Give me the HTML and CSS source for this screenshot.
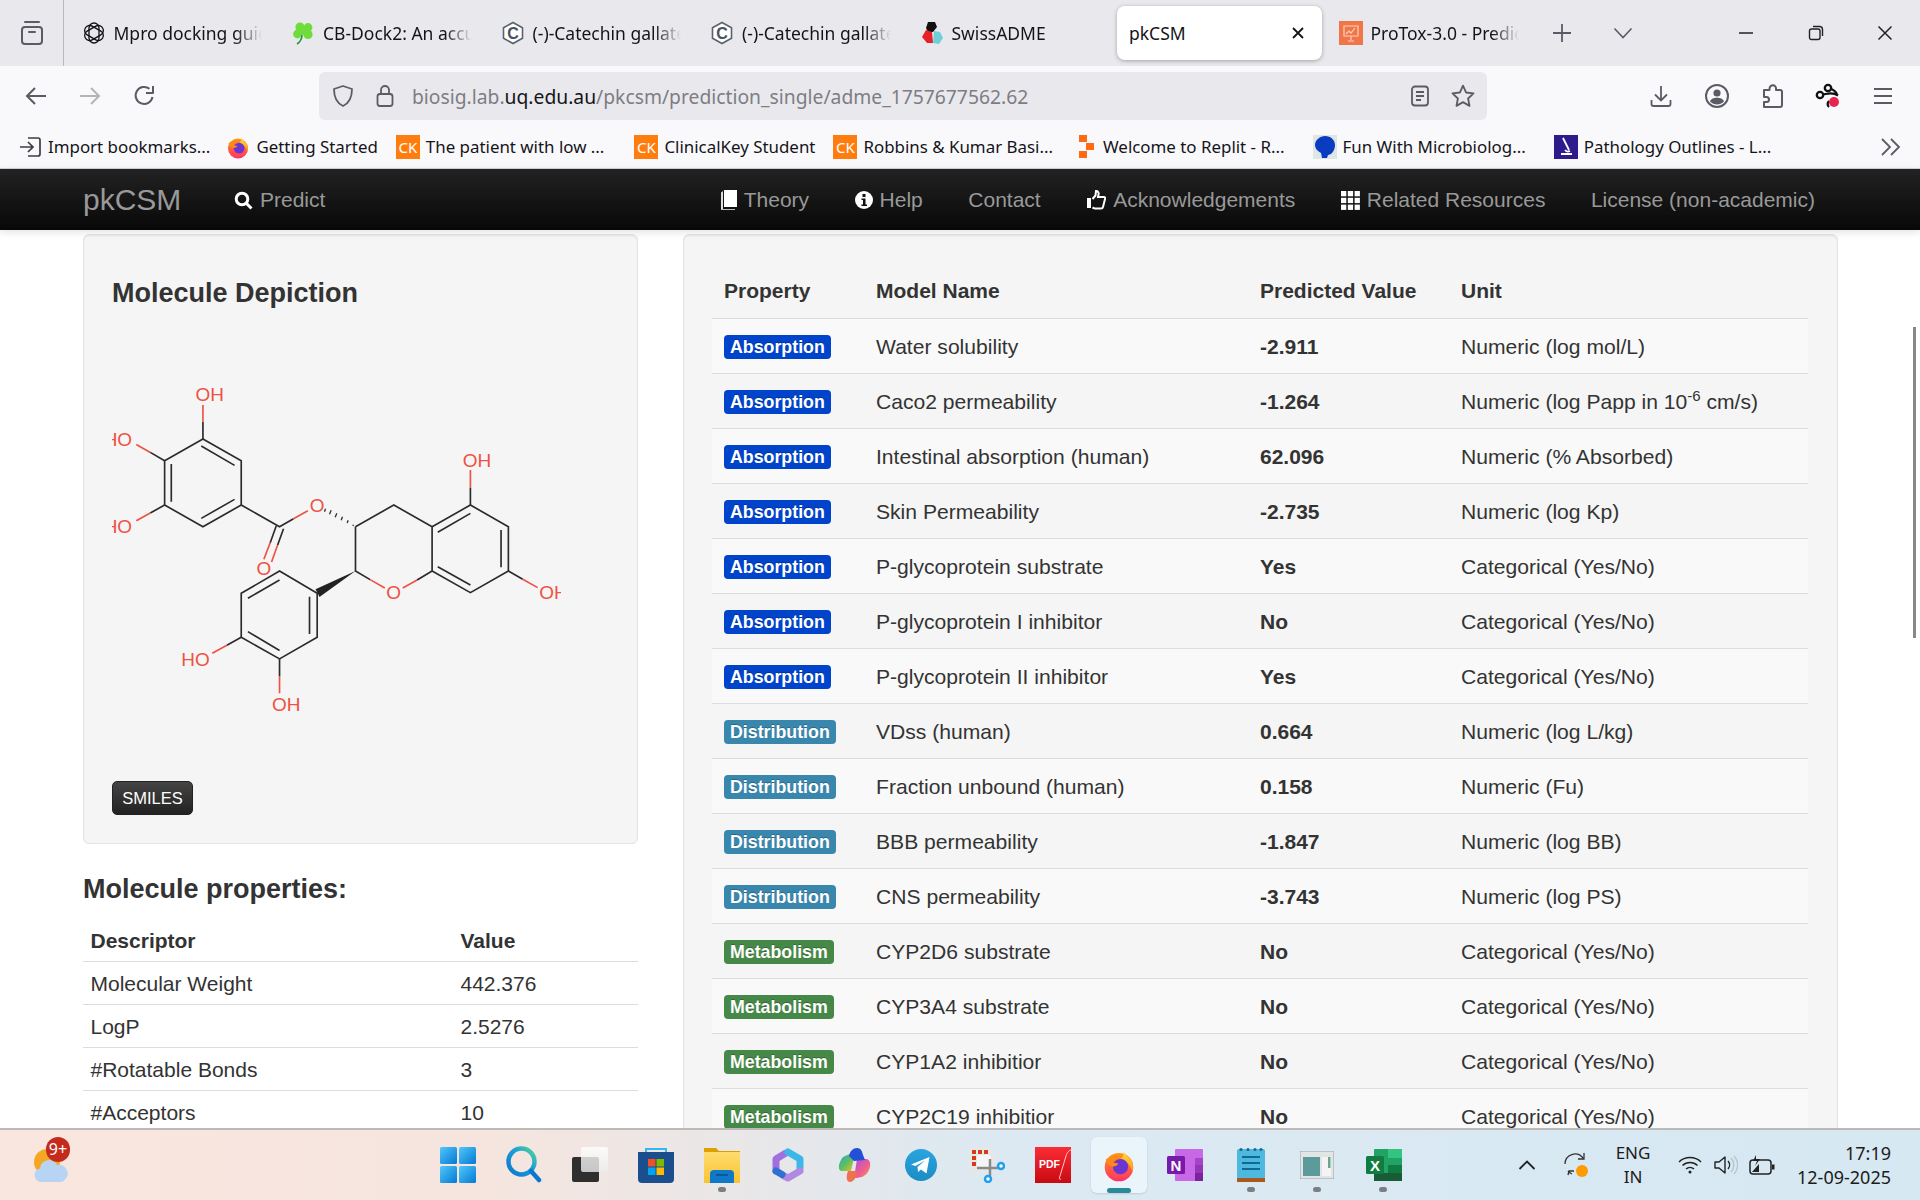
FILE: index.html
```html
<!DOCTYPE html>
<html lang="en">
<head>
    <meta charset="UTF-8">
    <title>pkCSM</title>
    <link rel="stylesheet" href="styles.css">
</head>
<body>
    <svg class="defs" width="0" height="0">
        <defs>
            <linearGradient id="fxBody" x1="0" y1="0" x2="0" y2="1"><stop offset="0" stop-color="#ff980e"/><stop offset="1" stop-color="#ff2f6a"/></linearGradient>
            <linearGradient id="fxTop" x1="0" y1="0" x2="0" y2="1"><stop offset="0" stop-color="#ffe14a"/><stop offset="1" stop-color="#ff9a10"/></linearGradient>
            <linearGradient id="winBlue" x1="0" y1="0" x2="1" y2="1"><stop offset="0" stop-color="#4fc8fa"/><stop offset="1" stop-color="#0678d4"/></linearGradient>
            <linearGradient id="searchRing" x1="0" y1="1" x2="1" y2="0"><stop offset="0" stop-color="#0a78d0"/><stop offset=".6" stop-color="#1f9fd8"/><stop offset="1" stop-color="#52d890"/></linearGradient>
            <linearGradient id="copA" x1="0" y1="0" x2="1" y2="1"><stop offset="0" stop-color="#2aa0e8"/><stop offset=".5" stop-color="#5cc05c"/><stop offset="1" stop-color="#f2c230"/></linearGradient>
            <linearGradient id="copB" x1="0" y1="0" x2="1" y2="1"><stop offset="0" stop-color="#b04ce0"/><stop offset=".6" stop-color="#f0608a"/><stop offset="1" stop-color="#f8a040"/></linearGradient>
            <linearGradient id="tg" x1="0" y1="0" x2="0" y2="1"><stop offset="0" stop-color="#2aa5e0"/><stop offset="1" stop-color="#1c8cc4"/></linearGradient>
            <linearGradient id="pdfRed" x1="0" y1="0" x2="0" y2="1"><stop offset="0" stop-color="#fb2c36"/><stop offset="1" stop-color="#c80a10"/></linearGradient>
            <linearGradient id="folderBody" x1="0" y1="0" x2="0" y2="1"><stop offset="0" stop-color="#ffdc6e"/><stop offset="1" stop-color="#f8c430"/></linearGradient>
            <linearGradient id="tvTop" x1="0" y1="0" x2="0" y2="1"><stop offset="0" stop-color="#ffffff"/><stop offset="1" stop-color="#ececec"/></linearGradient>
            <symbol id="firefox" viewBox="0 0 32 32">
                <circle cx="16" cy="18" r="13.4" fill="url(#fxBody)"/>
                <path d="M20 1.5c.6 4.6 5.6 6.6 8 11.4 1.3 2.8 1.6 6.4.6 9.4-2.2-7-6-10.6-11-11.6 2.6-2.6 3.4-5.6 2.4-9.2z" fill="url(#fxTop)"/>
                <circle cx="17.4" cy="17.6" r="7.2" fill="#6a35d0"/>
                <path d="M3.5 11c3-3.2 8-3.6 11.6-1.4-3 .4-5 2-5.4 4 2.4.4 4 .6 5.8 1.2-1.6 2.2-4 3-6.4 2.4-2.6-.6-5-3-5.6-6.2z" fill="#ff8a16"/>
                <path d="M11 27c5 2.4 12 1.4 15.6-3.6-4 2.6-9 3.2-13 1.4z" fill="#ff4a5a"/>
            </symbol>
        </defs>
    </svg>

    <div class="tabbar">
        <button class="sidebar-btn">
            <svg width="24" height="26" viewBox="0 0 24 26" fill="none" stroke="#5b5b66" stroke-width="2"><rect x="2" y="7" width="20" height="17" rx="3"/><path d="M5 2h14M9 12h6" stroke-linecap="round"/></svg>
        </button>
        <div class="tabs">
            <div class="tab"><div class="tab-in">
                <svg class="fav" viewBox="0 0 24 24" fill="none" stroke="#111" stroke-width="1.3"><rect x="7" y="2" width="10" height="20" rx="5"/><rect x="7" y="2" width="10" height="20" rx="5" transform="rotate(60 12 12)"/><rect x="7" y="2" width="10" height="20" rx="5" transform="rotate(120 12 12)"/></svg>
                <span class="tab-title">Mpro docking guide</span>
            </div></div>
            <div class="tab"><div class="tab-in">
                <svg class="fav" viewBox="0 0 24 24"><g fill="#6fdc3c"><circle cx="9" cy="6" r="4.6"/><circle cx="17" cy="6.5" r="4.4"/><circle cx="6.5" cy="13" r="4.4"/><circle cx="17" cy="13.5" r="4.6"/><circle cx="12" cy="10" r="4"/></g><path d="M11 14c0 4-2 7-5 9" stroke="#1e9a3c" stroke-width="1.6" fill="none"/></svg>
                <span class="tab-title">CB-Dock2: An accurate</span>
            </div></div>
            <div class="tab"><div class="tab-in">
                <svg class="fav" viewBox="0 0 24 24"><path d="M12 1.5l9.5 5.3v10.4L12 22.5 2.5 17.2V6.8z" fill="#fff" stroke="#5a6270" stroke-width="1.6"/><text x="12" y="17.5" class="fav-c">C</text></svg>
                <span class="tab-title">(-)-Catechin gallate</span>
            </div></div>
            <div class="tab"><div class="tab-in">
                <svg class="fav" viewBox="0 0 24 24"><path d="M12 1.5l9.5 5.3v10.4L12 22.5 2.5 17.2V6.8z" fill="#fff" stroke="#5a6270" stroke-width="1.6"/><text x="12" y="17.5" class="fav-c">C</text></svg>
                <span class="tab-title">(-)-Catechin gallate</span>
            </div></div>
            <div class="tab"><div class="tab-in">
                <svg class="fav" viewBox="0 0 24 24"><path d="M8 1h7l2 5-4 5H8l-2-4z" fill="#111"/><path d="M6 9l6 2 1 11H7l-5-6z" fill="#e8202a"/><path d="M14 10l6 1 3 6-4 6-6-1z" fill="#6fd0d8"/></svg>
                <span class="tab-title">SwissADME</span>
            </div></div>
            <div class="tab tab-active"><div class="tab-in">
                <span class="tab-title plain">pkCSM</span>
                <svg class="tab-x" width="14" height="14" viewBox="0 0 14 14" stroke="#15141a" stroke-width="1.8"><path d="M2 2l10 10M12 2L2 12"/></svg>
            </div></div>
            <div class="tab"><div class="tab-in">
                <svg class="fav" viewBox="0 0 24 24"><rect width="24" height="24" fill="#f0764a"/><path d="M5 5h14v10H5zM12 15v4M9 20h6" fill="none" stroke="#ffd0b8" stroke-width="1.2"/><path d="M7 13l3-3 2 2 4-5" fill="none" stroke="#ffd0b8" stroke-width="1.2"/></svg>
                <span class="tab-title">ProTox-3.0 - Prediction</span>
            </div></div>
        </div>
        <div class="tab-new"><svg width="20" height="20" viewBox="0 0 20 20" stroke="#5b5b66" stroke-width="1.8"><path d="M10 1v18M1 10h18"/></svg></div>
        <div class="tab-list"><svg width="20" height="12" viewBox="0 0 20 12" fill="none" stroke="#5b5b66" stroke-width="1.6"><path d="M1.5 1.5L10 10.5l8.5-9"/></svg></div>
        <div class="win-btns">
            <div class="win-btn"><svg width="16" height="16" viewBox="0 0 16 16" stroke="#222" stroke-width="1.5"><path d="M1 8h14"/></svg></div>
            <div class="win-btn"><svg width="16" height="16" viewBox="0 0 16 16" fill="none" stroke="#222" stroke-width="1.4"><rect x="1.5" y="4" width="10.5" height="10.5" rx="2"/><path d="M5 1.5h6.5a3 3 0 0 1 3 3V11"/></svg></div>
            <div class="win-btn"><svg width="16" height="16" viewBox="0 0 16 16" stroke="#222" stroke-width="1.5"><path d="M1.5 1.5l13 13M14.5 1.5l-13 13"/></svg></div>
        </div>
    </div>

    <div class="toolbar">
        <div class="tool-btn"><svg width="24" height="24" viewBox="0 0 24 24" fill="none" stroke="#5b5b66" stroke-width="2"><path d="M22 12H3M11 4l-8 8 8 8"/></svg></div>
        <div class="tool-btn"><svg width="24" height="24" viewBox="0 0 24 24" fill="none" stroke="#b4b4ba" stroke-width="2"><path d="M2 12h19M13 4l8 8-8 8"/></svg></div>
        <div class="tool-btn"><svg width="24" height="24" viewBox="0 0 24 24" fill="none" stroke="#5b5b66" stroke-width="2"><path d="M20.5 13a8.5 8.5 0 1 1-3-8.2"/><path d="M21 2v7h-7" stroke-linejoin="round"/></svg></div>
        <div class="urlbar">
            <svg width="24" height="24" viewBox="0 0 24 24" fill="none" stroke="#5b5b66" stroke-width="1.8"><path d="M12 2l9 3c0 9-2.5 14-9 17C5.5 19 3 14 3 5z" stroke-linejoin="round"/></svg>
            <svg class="lock" width="24" height="24" viewBox="0 0 24 24" fill="none" stroke="#5b5b66" stroke-width="1.8"><rect x="4.5" y="10" width="15" height="12" rx="2.5"/><path d="M8 10V6a4 4 0 0 1 8 0v4"/></svg>
            <span class="url-text">biosig.lab.<b>uq.edu.au</b>/pkcsm/prediction_single/adme_1757677562.62</span>
            <svg class="reader" width="24" height="24" viewBox="0 0 24 24" fill="none" stroke="#5b5b66" stroke-width="1.8"><rect x="4" y="2.5" width="16" height="19" rx="3"/><path d="M8 8h8M8 12h8M8 16h5"/></svg>
            <svg class="star" width="26" height="26" viewBox="0 0 24 24" fill="none" stroke="#5b5b66" stroke-width="1.7"><path d="M12 2.5l2.900 6.300 6.800.8-5 4.700 1.300 6.800-6-3.400-6 3.400 1.300-6.800-5-4.700 6.800-.8z" stroke-linejoin="round"/></svg>
        </div>
        <div class="tool-right">
            <div class="tool-icon"><svg width="24" height="24" viewBox="0 0 24 24" fill="none" stroke="#5b5b66" stroke-width="1.8"><path d="M12 2v14M6 10.5l6 6 6-6M2.5 16v4a2 2 0 0 0 2 2h15a2 2 0 0 0 2-2v-4"/></svg></div>
            <div class="tool-icon"><svg width="26" height="26" viewBox="0 0 26 26"><circle cx="13" cy="13" r="11" fill="none" stroke="#5b5b66" stroke-width="2"/><circle cx="13" cy="10" r="3.6" fill="#5b5b66"/><path d="M6 18.5c1-3 4-3.800 7-3.800s6 .8 7 3.800c-2 2-4.500 3-7 3s-5-1-7-3z" fill="#5b5b66"/></svg></div>
            <div class="tool-icon"><svg width="24" height="26" viewBox="0 0 24 26" fill="none" stroke="#5b5b66" stroke-width="2"><path d="M9.5 7h-5.500v7h2.500a2.500 2.500 0 0 1 0 5h-2.500v5h16a2 2 0 0 0 2-2V9a2 2 0 0 0-2-2h-4V6a3.200 3.200 0 0 0-6.400-1z" stroke-linejoin="round"/></svg></div>
            <div class="tool-icon"><svg width="26" height="26" viewBox="0 0 26 26" fill="none" stroke="#111" stroke-width="2.3"><circle cx="13" cy="5" r="3.2"/><circle cx="5" cy="12" r="3.2"/><path d="M8 11.500c4-.5 9-3 15 1M15 5.500c3 1 6 3 7 6M14 18a4 4 0 0 0 0 6"/><circle cx="19" cy="19" r="5" fill="#e8254f" stroke="none"/></svg></div>
            <div class="tool-icon"><svg width="20" height="18" viewBox="0 0 20 18" stroke="#5b5b66" stroke-width="2"><path d="M1 2h18M1 9h18M1 16h18"/></svg></div>
        </div>
    </div>

    <div class="bookmarks">
        <div class="bm bm-first">
            <svg class="fav" viewBox="0 0 24 24" fill="none" stroke="#3c3c44" stroke-width="1.7"><path d="M10 3h10a2 2 0 0 1 2 2v14a2 2 0 0 1-2 2H10M2 12h13M10 7l5 5-5 5"/></svg>
            <span>Import bookmarks...</span>
        </div>
        <div class="bm">
            <svg class="fav"><use href="#firefox"/></svg>
            <span>Getting Started</span>
        </div>
        <div class="bm bm-long">
            <span class="ck">CK</span>
            <span>The patient with low ...</span>
        </div>
        <div class="bm">
            <span class="ck">CK</span>
            <span>ClinicalKey Student</span>
        </div>
        <div class="bm bm-mid">
            <span class="ck">CK</span>
            <span>Robbins &amp; Kumar Basi...</span>
        </div>
        <div class="bm bm-wide">
            <svg class="fav-thin" viewBox="0 0 22 24" fill="#ff6a13"><rect x="4" y="0" width="8" height="7"/><rect x="11" y="8" width="8" height="7"/><rect x="4" y="16" width="8" height="7"/></svg>
            <span>Welcome to Replit - R...</span>
        </div>
        <div class="bm bm-wide">
            <svg class="fav" viewBox="0 0 24 24"><rect width="24" height="24" fill="#dfe6e8"/><path d="M12 1c6 0 10 4 10 9 0 6-4 10-7 10l-1 3H9l-1-5c-4-2-6-5-6-8C2 5 7 1 12 1z" fill="#0a3cc0"/></svg>
            <span>Fun With Microbiolog...</span>
        </div>
        <div class="bm">
            <svg class="fav" viewBox="0 0 24 24"><rect width="24" height="24" fill="#2d1b8e"/><path d="M9 3l6 12M7 19h11M11 15a4 4 0 0 0 5 1" fill="none" stroke="#fff" stroke-width="1.8"/></svg>
            <span>Pathology Outlines - L...</span>
        </div>
        <svg class="bm-more" width="22" height="20" viewBox="0 0 22 20" fill="none" stroke="#5b5b66" stroke-width="1.8"><path d="M2 2l8 8-8 8M11 2l8 8-8 8"/></svg>
    </div>

    <nav class="navbar">
        <a class="brand">pkCSM</a>
        <a class="nav-link">
            <svg width="19" height="19" viewBox="0 0 19 19" fill="none" stroke="#fff" stroke-width="3"><circle cx="8" cy="8" r="5.8"/><path d="M12 12l5.500 5.500"/></svg>
            Predict
        </a>
        <div class="nav-right">
            <a class="nav-link">
                <svg width="16" height="20" viewBox="0 0 16 20"><path d="M3 0h13v17H3z" fill="#fff"/><path d="M0 2.500L2 1v18l-2 1z" fill="#ddd"/><path d="M0 19h14v1H0z" fill="#bbb"/></svg>
                Theory
            </a>
            <a class="nav-link">
                <svg width="18" height="18" viewBox="0 0 18 18"><circle cx="9" cy="9" r="9" fill="#fff"/><rect x="7.5" y="3" width="3" height="3" fill="#111"/><path d="M6.500 7.500h4v6h1.500v1.500H6.500v-1.500H8V9H6.500z" fill="#111"/></svg>
                Help
            </a>
            <a class="nav-link">Contact</a>
            <a class="nav-link">
                <svg width="20" height="20" viewBox="0 0 20 20" fill="none" stroke="#fff" stroke-width="2"><path d="M6.500 9l3-3.500L10 1c2 0 3 1.500 2.500 3.500L12 7h6c1 0 1.500 1 1 2l-2 8c-.2 1-1 1.500-2 1.500H9c-1 0-1.500-.5-2.500-1"/><rect x="1" y="8" width="4" height="10" fill="#fff" stroke="none"/></svg>
                Acknowledgements
            </a>
            <a class="nav-link">
                <svg width="19" height="19" viewBox="0 0 19 19" fill="#fff"><rect width="5.3" height="5.3"/><rect x="6.8" width="5.3" height="5.3"/><rect x="13.6" width="5.3" height="5.3"/><rect y="6.8" width="5.3" height="5.3"/><rect x="6.8" y="6.8" width="5.3" height="5.3"/><rect x="13.6" y="6.8" width="5.3" height="5.3"/><rect y="13.6" width="5.3" height="5.3"/><rect x="6.8" y="13.6" width="5.3" height="5.3"/><rect x="13.6" y="13.6" width="5.3" height="5.3"/></svg>
                Related Resources
            </a>
            <a class="nav-link">License (non-academic)</a>
        </div>
    </nav>

    <div class="content">
        <div class="col-left">
            <div class="well well-mol">
                <h3>Molecule Depiction</h3>
                <svg class="mol" width="449" height="370" viewBox="97 0 1348 1110">
                    <g fill="none" stroke="#2b2b2b" stroke-width="5">
                        <path d="M370 237L485 302V435L370 500L255 435V302Z"/>
                        <path d="M365 258L465 316M275 312V425M365 475L465 418"/>
                        <path d="M370 237V185M255 302L212 277M255 435L212 459"/>
                        <path d="M485 435L600 500L642 476"/>
                        <path d="M590 498L572 548M612 506L594 556"/>
                        <path d="M828 500L943 435L1058 500V633L1013 660M828 500V633L872 659"/>
                        <path d="M1058 500L1173 435L1287 500V633L1173 698L1058 633"/>
                        <path d="M1075 517L1173 460M1265 510V622M1075 620L1173 675"/>
                        <path d="M1173 435V382M1287 633L1330 658"/>
                        <path d="M713 700L600 633L485 700V832L600 897L713 832Z"/>
                        <path d="M505 715L600 660M690 710V822M505 815L600 872"/>
                        <path d="M485 832L442 856M600 897V950"/>
                    </g>
                    <g fill="none" stroke="#ee5244" stroke-width="5">
                        <path d="M370 185V135M212 277L170 253M212 459L170 482"/>
                        <path d="M642 476L685 452"/>
                        <path d="M572 548L553 598M594 556L576 606"/>
                        <path d="M1013 660L970 684M872 659L916 684"/>
                        <path d="M1173 382V330M1330 658L1375 683"/>
                        <path d="M442 856L398 880M600 950V1000"/>
                    </g>
                    <polygon points="828,633 708,688 720,711" fill="#222"/>
                    <path d="M738 446l-3 9M755 451l-5 12M772 460l-5 12M789 470l-4 11M806 481l-3 8M822 494l-2 4" fill="none" stroke="#333" stroke-width="4"/>
                    <g class="atom">
                        <text x="348" y="124">OH</text>
                        <text x="72" y="258">HO</text>
                        <text x="72" y="518">HO</text>
                        <text x="691" y="456">O</text>
                        <text x="531" y="646">O</text>
                        <text x="1150" y="322">OH</text>
                        <text x="920" y="718">O</text>
                        <text x="1380" y="718">OH</text>
                        <text x="305" y="918">HO</text>
                        <text x="577" y="1052">OH</text>
                    </g>
                </svg>
                <button class="btn-smiles">SMILES</button>
            </div>
            <h3 class="props-title">Molecule properties:</h3>
            <table class="props">
                <tr><th class="props-a">Descriptor</th><th>Value</th></tr>
                <tr><td>Molecular Weight</td><td>442.376</td></tr>
                <tr><td>LogP</td><td>2.5276</td></tr>
                <tr><td>#Rotatable Bonds</td><td>3</td></tr>
                <tr><td>#Acceptors</td><td>10</td></tr>
            </table>
        </div>
        <div class="col-right">
            <div class="well well-table">
                <table class="results">
                    <colgroup><col class="c1"><col class="c2"><col class="c3"><col class="c4"></colgroup>
                    <tr class="head"><th>Property</th><th>Model Name</th><th>Predicted Value</th><th>Unit</th></tr>
                    <tr><td><span class="label abs">Absorption</span></td><td>Water solubility</td><td><b>-2.911</b></td><td>Numeric (log mol/L)</td></tr>
                    <tr><td><span class="label abs">Absorption</span></td><td>Caco2 permeability</td><td><b>-1.264</b></td><td>Numeric (log Papp in 10<sup>-6</sup> cm/s)</td></tr>
                    <tr><td><span class="label abs">Absorption</span></td><td>Intestinal absorption (human)</td><td><b>62.096</b></td><td>Numeric (% Absorbed)</td></tr>
                    <tr><td><span class="label abs">Absorption</span></td><td>Skin Permeability</td><td><b>-2.735</b></td><td>Numeric (log Kp)</td></tr>
                    <tr><td><span class="label abs">Absorption</span></td><td>P-glycoprotein substrate</td><td><b>Yes</b></td><td>Categorical (Yes/No)</td></tr>
                    <tr><td><span class="label abs">Absorption</span></td><td>P-glycoprotein I inhibitor</td><td><b>No</b></td><td>Categorical (Yes/No)</td></tr>
                    <tr><td><span class="label abs">Absorption</span></td><td>P-glycoprotein II inhibitor</td><td><b>Yes</b></td><td>Categorical (Yes/No)</td></tr>
                    <tr><td><span class="label dist">Distribution</span></td><td>VDss (human)</td><td><b>0.664</b></td><td>Numeric (log L/kg)</td></tr>
                    <tr><td><span class="label dist">Distribution</span></td><td>Fraction unbound (human)</td><td><b>0.158</b></td><td>Numeric (Fu)</td></tr>
                    <tr><td><span class="label dist">Distribution</span></td><td>BBB permeability</td><td><b>-1.847</b></td><td>Numeric (log BB)</td></tr>
                    <tr><td><span class="label dist">Distribution</span></td><td>CNS permeability</td><td><b>-3.743</b></td><td>Numeric (log PS)</td></tr>
                    <tr><td><span class="label met">Metabolism</span></td><td>CYP2D6 substrate</td><td><b>No</b></td><td>Categorical (Yes/No)</td></tr>
                    <tr><td><span class="label met">Metabolism</span></td><td>CYP3A4 substrate</td><td><b>No</b></td><td>Categorical (Yes/No)</td></tr>
                    <tr><td><span class="label met">Metabolism</span></td><td>CYP1A2 inhibitior</td><td><b>No</b></td><td>Categorical (Yes/No)</td></tr>
                    <tr><td><span class="label met">Metabolism</span></td><td>CYP2C19 inhibitior</td><td><b>No</b></td><td>Categorical (Yes/No)</td></tr>
                </table>
            </div>
        </div>
        <div class="scroll-thumb"></div>
    </div>

    <div class="taskbar">
        <div class="tb-left">
            <div class="weather">
                <svg width="36" height="36" viewBox="0 0 36 36"><circle cx="15" cy="14" r="13" fill="#f5a623"/><path d="M9 34a7 7 0 0 1-1-13.800A9 9 0 0 1 25 17a8.500 8.500 0 0 1 4 17z" fill="#b8d4f4"/></svg>
                <span class="badge">9+</span>
            </div>
        </div>
        <div class="tb-apps">
            <div class="app">
                <svg width="36" height="36" viewBox="0 0 36 36" fill="url(#winBlue)"><rect x="0" y="0" width="17" height="17" rx="1.5"/><rect x="19" y="0" width="17" height="17" rx="1.5"/><rect x="0" y="19" width="17" height="17" rx="1.5"/><rect x="19" y="19" width="17" height="17" rx="1.5"/></svg>
            </div>
            <div class="app">
                <svg width="36" height="38" viewBox="0 0 36 38" fill="none"><circle cx="15.5" cy="15.5" r="13" stroke="url(#searchRing)" stroke-width="4.5"/><path d="M25 25l8 9" stroke="#0a78d0" stroke-width="4.5" stroke-linecap="round"/></svg>
            </div>
            <div class="app">
                <svg width="36" height="36" viewBox="0 0 36 36"><rect x="0" y="10" width="27" height="25" rx="2" fill="#2e2e2e"/><rect x="9" y="0" width="27" height="25" rx="2" fill="url(#tvTop)" opacity=".8"/></svg>
            </div>
            <div class="app">
                <svg width="36" height="36" viewBox="0 0 36 36"><path d="M8 7V2h20v5" fill="none" stroke="#31b8ec" stroke-width="2"/><path d="M0 5h36v27a4 4 0 0 1-4 4H4a4 4 0 0 1-4-4z" fill="#1a4e8c"/><rect x="10" y="12" width="7.5" height="7.5" fill="#f25022"/><rect x="18.5" y="12" width="7.5" height="7.5" fill="#7fba00"/><rect x="10" y="20.5" width="7.5" height="7.5" fill="#00a4ef"/><rect x="18.5" y="20.5" width="7.5" height="7.5" fill="#ffb900"/></svg>
            </div>
            <div class="app">
                <svg width="36" height="36" viewBox="0 0 36 36"><path d="M0 1h12l3 3h21v6H0z" fill="#dca000"/><path d="M0 5h36v31H0z" fill="url(#folderBody)"/><path d="M6 36v-9a4 4 0 0 1 4-4h16a4 4 0 0 1 4 4v9z" fill="#0f78c8"/><path d="M12 28h12" stroke="#0a4f8c" stroke-width="1.5"/></svg>
                <span class="dot"></span>
            </div>
            <div class="app">
                <svg width="34" height="36" viewBox="0 0 34 36" fill="none" stroke-width="7" stroke-linecap="round" stroke-linejoin="round"><path d="M5 24V12L14 6.500" stroke="#a070e0"/><path d="M17 5L29 12V21" stroke="#3cb8e8"/><path d="M29 24L17 31 13 29" stroke="#b08ae0"/><path d="M5 24L11 27.500" stroke="#2f70d0"/></svg>
            </div>
            <div class="app">
                <svg width="36" height="36" viewBox="0 0 36 36"><path d="M5 13C7 8 14 7 19 7L15 24H6C2 24 2 18 5 13z" fill="url(#copA)"/><path d="M21 12H30C35 12 35 19 33 23 30 30 24 31 18 31z" fill="url(#copB)"/><path d="M13 9C14 4 17 1 21 1 25 1 26 4 27 8L29 13 18 14z" fill="#2450d8"/><path d="M12 24H21C21 31 17 35 14 35 10 35 10 29 12 24z" fill="#f07050"/></svg>
            </div>
            <div class="app">
                <svg width="32" height="32" viewBox="0 0 32 32"><circle cx="16" cy="16" r="16" fill="url(#tg)"/><path d="M6 15.500l18.500-7.500-3 16.500-5.500-4-3 2.500-.5-5 7.500-6.500-9.500 5.500z" fill="#fff"/></svg>
            </div>
            <div class="app">
                <svg width="36" height="36" viewBox="0 0 36 36"><rect x="0" y="0" width="26" height="26" rx="4" fill="#e6e7e8"/><rect x="8" y="8" width="14" height="14" rx="2" fill="#f5f5f5"/><g fill="#d83b1a"><rect x="3" y="3" width="4" height="4"/><rect x="9" y="3" width="4" height="4"/><rect x="15" y="3" width="4" height="4"/><rect x="3" y="9" width="4" height="4"/><rect x="3" y="15" width="4" height="4"/></g><path d="M21 12v20M8 21h22" stroke="#8a8a8a" stroke-width="2.5"/><circle cx="32" cy="19" r="3" fill="#fff" stroke="#1ea0f0" stroke-width="2.5"/><circle cx="19" cy="32" r="3" fill="#fff" stroke="#1ea0f0" stroke-width="2.5"/></svg>
            </div>
            <div class="app">
                <svg width="36" height="36" viewBox="0 0 36 36"><rect width="36" height="36" fill="url(#pdfRed)"/><text x="4" y="21" class="pdf-text">PDF</text><path d="M26 32c-2 1-2-1-1-3l6-20c1-4 4-6 5-6" fill="none" stroke="#ffc8c8" stroke-width="1"/></svg>
            </div>
            <div class="app active">
                <svg width="34" height="36"><use href="#firefox"/></svg>
                <span class="active-bar"></span>
            </div>
            <div class="app">
                <svg width="36" height="32" viewBox="0 0 36 32"><rect x="8" y="0" width="28" height="32" rx="1" fill="#c868e6"/><rect x="28" y="9" width="8" height="7" fill="#a444c8"/><rect x="28" y="16" width="8" height="8" fill="#9435b8"/><rect x="28" y="24" width="8" height="8" fill="#7a22a0"/><rect x="0" y="7" width="18" height="18" rx="1.5" fill="#7719aa"/><text x="9" y="21.5" class="tile-letter">N</text></svg>
            </div>
            <div class="app">
                <svg width="28" height="36" viewBox="0 0 28 36"><rect x="0" y="2" width="28" height="30" rx="2" fill="#4fb8de"/><rect x="0" y="31" width="28" height="4" fill="#a85a1c"/><g fill="#1a6a8e"><circle cx="4" cy="2.5" r="1.6"/><circle cx="11" cy="2.5" r="1.6"/><circle cx="18" cy="2.5" r="1.6"/><circle cx="24" cy="2.5" r="1.6"/></g><path d="M5 10h18M5 16h18M5 22h18" stroke="#0f6a90" stroke-width="2"/></svg>
                <span class="dot"></span>
            </div>
            <div class="app">
                <svg width="34" height="28" viewBox="0 0 34 28"><rect width="34" height="28" fill="#e2e4e6" stroke="#9aa0a6"/><rect x="3" y="6" width="17" height="19" fill="#5d9a9a"/><rect x="22" y="6" width="9" height="19" fill="#f4f4f4"/><rect x="28" y="6" width="2.5" height="11" fill="#6aa58f"/></svg>
                <span class="dot"></span>
            </div>
            <div class="app">
                <svg width="36" height="32" viewBox="0 0 36 32"><rect x="8" y="0" width="28" height="32" rx="1" fill="#21a366"/><rect x="22" y="0" width="14" height="9" fill="#33c481"/><rect x="22" y="16" width="14" height="8" fill="#107c41"/><rect x="8" y="24" width="28" height="8" fill="#185c37"/><rect x="0" y="7" width="18" height="18" rx="1.5" fill="#107c41"/><text x="9" y="21.5" class="tile-letter">X</text></svg>
                <span class="dot"></span>
            </div>
        </div>
        <div class="tray">
            <svg class="t-chev" width="18" height="10" viewBox="0 0 18 10" fill="none" stroke="#222" stroke-width="1.8"><path d="M1.5 9L9 1.500 16.500 9"/></svg>
            <svg class="t-sync" width="26" height="26" viewBox="0 0 26 26" fill="none" stroke="#333" stroke-width="1.3"><path d="M2 12a10 10 0 0 1 18-6M21 1v6h-6M5 23l1-4h5M5 19a10 10 0 0 0 4 3"/><circle cx="19" cy="19" r="6" fill="#ff9a00" stroke="none"/></svg>
            <div class="t-lang"><span>ENG</span><span>IN</span></div>
            <svg class="t-wifi" width="24" height="18" viewBox="0 0 24 18" fill="none" stroke="#222" stroke-width="1.5"><path d="M1 6a16 16 0 0 1 22 0M4.500 9.500a11 11 0 0 1 15 0M8 13a6 6 0 0 1 8 0"/><circle cx="12" cy="16" r="1.5" fill="#222" stroke="none"/></svg>
            <svg class="t-vol" width="24" height="20" viewBox="0 0 24 20" fill="none" stroke="#222" stroke-width="1.4"><path d="M1 7h4l6-5v16l-6-5H1z" stroke-linejoin="round"/><path d="M14 6a6 6 0 0 1 0 8"/><path d="M17 3a10 10 0 0 1 0 14M20 1a13 13 0 0 1 0 18" stroke="#b8c4cc"/></svg>
            <svg class="t-batt" width="26" height="22" viewBox="0 0 26 22"><rect x="1" y="6" width="21" height="14" rx="3" fill="none" stroke="#222" stroke-width="1.5"/><path d="M3 18l7-8v8z" fill="#222"/><rect x="23" y="10.5" width="2.5" height="5" fill="#222"/><path d="M7 1L4 7h4l-2 5 5-7H7z" fill="#222"/></svg>
            <div class="t-clock"><span>17:19</span><span>12-09-2025</span></div>
        </div>
    </div>
</body>
</html>
```

FILE: styles.css
```css
* {
    box-sizing: border-box;
}
html, body {
    margin: 0;
    padding: 0;
    height: 1200px;
    overflow: hidden;
    background: #fff;
}
body {
    display: flex;
    flex-direction: column;
    font-family: "Liberation Sans", Arial, sans-serif;
    color: #333;
}
.defs {
    position: absolute;
}
.fav {
    width: 24px;
    height: 24px;
    flex: none;
}
.fav-thin {
    width: 22px;
    height: 24px;
    flex: none;
}

/* browser tabs */
.tabbar {
    height: 66px;
    flex: none;
    display: flex;
    background: #e9e9ed;
    font-family: "Noto Sans", sans-serif;
    font-size: 17.5px;
    color: #15141a;
}
.sidebar-btn {
    width: 64px;
    flex: none;
    margin-right: 3px;
    padding: 0;
    border: 0;
    border-right: 1px solid #b9b9bd;
    background: none;
    display: flex;
    align-items: center;
    justify-content: center;
}
.tabs {
    display: flex;
}
.tab {
    width: 209.5px;
    padding: 6px 2.5px;
}
.tab-in {
    height: 54px;
    padding: 0 12px;
    display: flex;
    align-items: center;
    gap: 8px;
    border-radius: 8px;
}
.tab-title {
    flex: 1;
    overflow: hidden;
    white-space: nowrap;
    -webkit-mask-image: linear-gradient(to right, #000 82%, transparent);
    mask-image: linear-gradient(to right, #000 82%, transparent);
}
.tab-title.plain {
    -webkit-mask-image: none;
    mask-image: none;
}
.tab-active .tab-in {
    background: #fff;
    box-shadow: 0 1px 4px rgba(0, 0, 0, .3);
}
.tab-x {
    margin-right: 5px;
}
.fav-c {
    font: bold 16px "Liberation Sans", sans-serif;
    fill: #4a5260;
    text-anchor: middle;
}
.tab-new {
    width: 56px;
    display: flex;
    align-items: center;
    justify-content: center;
}
.tab-list {
    width: 67px;
    display: flex;
    align-items: center;
    justify-content: center;
}
.win-btns {
    margin-left: auto;
    display: flex;
}
.win-btn {
    width: 69.5px;
    display: flex;
    align-items: center;
    justify-content: center;
}

/* url row */
.toolbar {
    height: 60px;
    flex: none;
    display: flex;
    align-items: center;
    padding-left: 9px;
    background: #f9f9fb;
}
.tool-btn {
    width: 54px;
    display: flex;
    justify-content: center;
}
.urlbar {
    width: 1168px;
    height: 48px;
    margin-left: 148px;
    padding: 0 11px 0 12px;
    display: flex;
    align-items: center;
    border-radius: 6px;
    background: #e9e9ed;
}
.lock {
    margin-left: 18px;
}
.url-text {
    margin-left: 15px;
    font: 19.3px "Noto Sans", sans-serif;
    color: #7d7d83;
    white-space: nowrap;
}
.url-text b {
    font-weight: normal;
    color: #15141a;
}
.reader {
    margin-left: auto;
}
.star {
    margin-left: 18px;
}
.tool-right {
    margin-left: auto;
    padding-right: 9px;
    display: flex;
}
.tool-icon {
    width: 55.5px;
    display: flex;
    justify-content: center;
    align-items: center;
}

/* bookmarks */
.bookmarks {
    height: 43px;
    flex: none;
    display: flex;
    align-items: center;
    gap: 18px;
    padding: 0 18px 1px 18px;
    background: #f9f9fb;
    border-bottom: 1px solid #d4d4d8;
    font: 16.9px "Noto Sans", sans-serif;
    color: #15141a;
}
.bm {
    display: flex;
    align-items: center;
    gap: 6px;
    white-space: nowrap;
}
.bm-first {
    margin-right: -2px;
}
.bm-long {
    margin-right: 12px;
}
.bm-mid {
    margin-right: 4px;
}
.bm-wide {
    margin-right: 10px;
}
.ck {
    width: 24px;
    height: 24px;
    background: #ff7d0f;
    color: #fff;
    font-size: 15px;
    line-height: 24px;
    text-align: center;
}
.bm-more {
    margin-left: auto;
}

/* site navbar */
.navbar {
    height: 61px;
    flex: none;
    position: relative;
    z-index: 2;
    display: flex;
    align-items: center;
    padding: 1px 0 0 83px;
    background: linear-gradient(#222222, #080808);
    box-shadow: 0 2px 8px rgba(0, 0, 0, .12);
    color: #999;
}
.brand {
    width: 151px;
    font-size: 30px;
}
.nav-link {
    display: flex;
    align-items: center;
    gap: 7px;
    font-size: 21px;
}
.nav-right {
    margin-left: auto;
    padding-right: 105px;
    display: flex;
    gap: 45.5px;
}

/* page */
.content {
    flex: 1;
    min-height: 0;
    position: relative;
    overflow: hidden;
    display: flex;
    gap: 45px;
    padding: 4px 0 0 83px;
}
.col-left {
    width: 555px;
    flex: none;
}
.col-right {
    width: 1155px;
    flex: none;
}
.well {
    border: 1px solid #e3e3e3;
    border-radius: 6px;
    background: #f5f5f5;
    box-shadow: inset 0 1px 2px rgba(0, 0, 0, .05);
}
.well-mol {
    padding: 38px 28px 28px;
}
.well-mol h3 {
    margin: 0;
    font-size: 27px;
    line-height: 40px;
}
.mol {
    display: block;
    margin-top: 47px;
}
.atom text {
    font-size: 57px;
    fill: #ee5244;
}
.btn-smiles {
    display: block;
    width: 81px;
    height: 34px;
    margin-top: 51px;
    padding: 0;
    border: 1px solid #222;
    border-radius: 5px;
    background: linear-gradient(#444444, #222222);
    color: #fff;
    font: 16.5px "Liberation Sans", sans-serif;
}
.props-title {
    margin: 25px 0 10px;
    font-size: 27px;
    line-height: 40px;
}
.props {
    width: 100%;
    border-collapse: collapse;
    font-size: 21px;
}
.props th, .props td {
    height: 43px;
    padding: 2px 7.5px 0;
    text-align: left;
    border-top: 1px solid #ddd;
}
.props th {
    height: 42px;
    border-top: 0;
    font-size: 21px;
}
.props-a {
    width: 370px;
}
.well-table {
    padding: 29px 29px 0 28px;
    height: 1200px;
}
.results {
    width: 1096px;
    table-layout: fixed;
    border-collapse: collapse;
    font-size: 21.1px;
}
.c1 { width: 152px; }
.c2 { width: 384px; }
.c3 { width: 201px; }
.c4 { width: 359px; }
.results th, .results td {
    height: 55px;
    padding: 2px 12px 0;
    text-align: left;
    border-top: 1px solid #ddd;
    white-space: nowrap;
}
.results .head th {
    height: 54px;
    padding-top: 0;
    border-top: 0;
    font-size: 21px;
}
.results tr:nth-child(even) td {
    background: #f9f9f9;
}
.results b {
    font-size: 21px;
}
.results sup {
    font-size: 15px;
    line-height: 0;
}
.label {
    display: inline-block;
    height: 24px;
    padding: 0 6px;
    border-radius: 4px;
    font-size: 17.8px;
    font-weight: bold;
    line-height: 24px;
    color: #fff;
    text-shadow: 0 -1px 0 rgba(0, 0, 0, .25);
    vertical-align: middle;
}
.abs { background: #0044cc; }
.dist { background: #3a87ad; }
.met { background: #468847; }
.scroll-thumb {
    position: absolute;
    left: 1913px;
    top: 97px;
    width: 3px;
    height: 311px;
    background: #888;
}

/* windows taskbar */
.taskbar {
    height: 72px;
    flex: none;
    display: flex;
    align-items: center;
    border-top: 2px solid #bdb9b6;
    background: linear-gradient(to right, #f8e6df 0%, #f6e5de 25%, #dce9f2 52%, #d6e8f2 100%);
    font-family: "Noto Sans", sans-serif;
    color: #1c1c1c;
}
.tb-left {
    width: 424.5px;
    flex: none;
    padding-left: 32px;
}
.weather {
    position: relative;
    width: 36px;
    height: 36px;
    margin-top: 2px;
}
.badge {
    position: absolute;
    left: 14px;
    top: -11px;
    width: 24px;
    height: 25px;
    border-radius: 12.5px;
    background: #c42b1c;
    color: #fff;
    font-size: 16px;
    line-height: 25px;
    text-align: center;
}
.tb-apps {
    display: flex;
}
.app {
    position: relative;
    width: 66.15px;
    height: 56px;
    display: flex;
    align-items: center;
    justify-content: center;
}
.app.active::before {
    content: "";
    position: absolute;
    left: 5px;
    right: 5px;
    top: 0;
    bottom: 0;
    border-radius: 6px;
    background: #eaf4fb;
    box-shadow: 0 1px 2px rgba(0, 0, 0, .12);
}
.app svg {
    position: relative;
}
.dot {
    position: absolute;
    left: 29px;
    bottom: 1px;
    width: 8px;
    height: 5px;
    border-radius: 3px;
    background: #7b7f83;
}
.active-bar {
    position: absolute;
    left: 21px;
    bottom: 0;
    width: 24px;
    height: 5px;
    border-radius: 3px;
    background: #2a8a9c;
}
.pdf-text {
    font: bold 10.5px "Liberation Sans", sans-serif;
    fill: #fff;
}
.tile-letter {
    font: bold 15px "Liberation Sans", sans-serif;
    fill: #fff;
    text-anchor: middle;
}
.tray {
    margin-left: auto;
    padding-right: 29px;
    display: flex;
    align-items: center;
}
.t-sync { margin-left: 27px; }
.t-lang {
    width: 40px;
    margin-left: 24px;
    display: flex;
    flex-direction: column;
    align-items: center;
    font-size: 17px;
    line-height: 24px;
}
.t-wifi { margin-left: 25px; }
.t-vol { margin-left: 12px; }
.t-batt { margin-left: 11px; }
.t-clock {
    margin-left: 22px;
    display: flex;
    flex-direction: column;
    align-items: flex-end;
    font-size: 18px;
    line-height: 24px;
}
```
